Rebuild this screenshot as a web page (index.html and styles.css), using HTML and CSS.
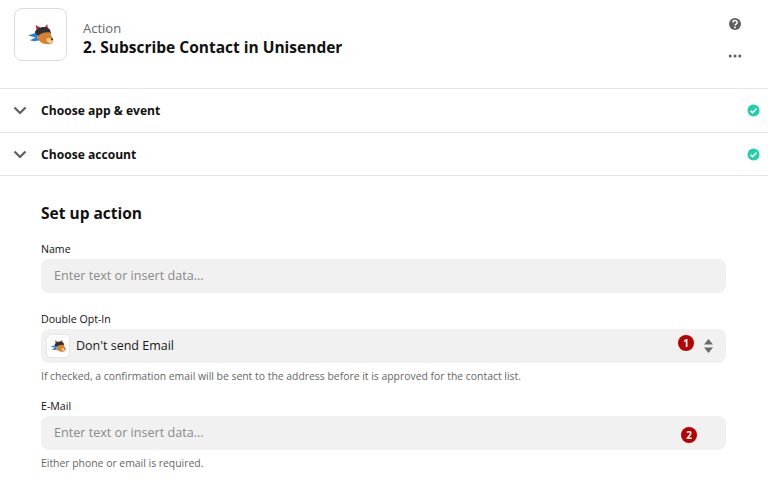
FILE: index.html
```html
<!DOCTYPE html>
<html lang="en">
<head>
  <meta charset="UTF-8" />
  <title>Subscribe Contact in Unisender</title>
  <link rel="stylesheet" href="styles.css">
</head>
<body>
  <svg width="0" height="0" class="defs">
    <symbol id="dog" viewBox="0 0 28 24">
      <path d="M1 13 L7 11 L11 10 L11 16 L14 18 L7 19 L3 18 L9 15 Z" fill="#2b7fd0"/>
      <path d="M10 8 L9 2 L14 5 Z" fill="#d8262c"/>
      <path d="M18 5 L21 1 L22 7 Z" fill="#d8262c"/>
      <path d="M8 10 C10 4 20 2 24 7 L25 11 L12 14 Z" fill="#2c3138"/>
      <path d="M11 14 C14 10 21 9 24 10 C25 14 28 17 27 20 C25 23 17 23 13 19 Z" fill="#d9812e"/>
      <path d="M20 17 C22 14 27 16 27 20 C25 22 21 22 20 17 Z" fill="#f0c98f"/>
      <circle cx="26" cy="17" r="1.1" fill="#2c3138"/>
    </symbol>
  </svg>

  <header class="top">
    <div class="app-icon"><svg width="27" height="23"><use href="#dog"/></svg></div>
    <div class="top-text">
      <div class="kind">Action</div>
      <h1>2. Subscribe Contact in Unisender</h1>
    </div>
    <div class="top-tools">
      <svg class="help" width="14" height="14" viewBox="0 0 14 14">
        <circle cx="7" cy="7" r="6" fill="#5f5f5f"/>
        <path d="M4.9 5.5 C4.9 2.9 9.2 2.9 9.2 5.4 C9.2 7 7 7 7 8.4" fill="none" stroke="#fff" stroke-width="1.5"/>
        <circle cx="7" cy="10.4" r="0.95" fill="#fff"/>
      </svg>
      <svg class="more" width="14" height="4" viewBox="0 0 14 4">
        <circle cx="2.2" cy="2" r="1.5" fill="#5f5f5f"/>
        <circle cx="7" cy="2" r="1.5" fill="#5f5f5f"/>
        <circle cx="11.8" cy="2" r="1.5" fill="#5f5f5f"/>
      </svg>
    </div>
  </header>

  <div class="step step-first">
    <svg class="chev" width="14" height="9" viewBox="0 0 14 9"><path d="M1.5 1.5 L7 7 L12.5 1.5" fill="none" stroke="#5f5f5f" stroke-width="2.2"/></svg>
    <span class="step-name">Choose app &amp; event</span>
    <svg class="ok" width="13" height="13" viewBox="0 0 13 13"><circle cx="6.5" cy="6.5" r="6" fill="#1fcfa8"/><path d="M3.6 6.8 L5.6 8.7 L9.5 4.6" fill="none" stroke="#fff" stroke-width="1.6"/></svg>
  </div>
  <div class="step">
    <svg class="chev" width="14" height="9" viewBox="0 0 14 9"><path d="M1.5 1.5 L7 7 L12.5 1.5" fill="none" stroke="#5f5f5f" stroke-width="2.2"/></svg>
    <span class="step-name">Choose account</span>
    <svg class="ok" width="13" height="13" viewBox="0 0 13 13"><circle cx="6.5" cy="6.5" r="6" fill="#1fcfa8"/><path d="M3.6 6.8 L5.6 8.7 L9.5 4.6" fill="none" stroke="#fff" stroke-width="1.6"/></svg>
  </div>

  <main class="setup">
    <h2>Set up action</h2>

    <div class="field">
      <label>Name</label>
      <div class="box placeholder">Enter text or insert data...</div>
    </div>

    <div class="field">
      <label>Double Opt-In</label>
      <div class="box select">
        <span class="mini-icon"><svg width="16" height="14"><use href="#dog"/></svg></span>
        <span class="value">Don't send Email</span>
        <span class="badge badge-one">1</span>
        <svg class="updown" width="9" height="14" viewBox="0 0 9 14"><path d="M4.5 0 L9 5.6 L0 5.6 Z M0 8.4 L9 8.4 L4.5 14 Z" fill="#6b6b6b"/></svg>
      </div>
      <p class="hint">If checked, a confirmation email will be sent to the address before it is approved for the contact list.</p>
    </div>

    <div class="field field-email">
      <label>E-Mail</label>
      <div class="box placeholder">Enter text or insert data...<span class="badge badge-two">2</span></div>
      <p class="hint">Either phone or email is required.</p>
    </div>
  </main>
</body>
</html>
```

FILE: styles.css
```css
html, body {
  margin: 0;
  padding: 0;
}
body {
  background: #fff;
  color: #1a1a1a;
  font-family: "Open Sans", sans-serif;
  height: 480px;
  overflow: hidden;
}
.defs {
  display: block;
  height: 0;
}
.top {
  display: flex;
  height: 89px;
  padding: 8px 26px 0 14px;
  box-sizing: border-box;
  border-bottom: 1px solid #e3e5e8;
}
.app-icon {
  width: 53px;
  height: 53px;
  box-sizing: border-box;
  border: 1px solid #dcdcdc;
  border-radius: 8px;
  display: flex;
  align-items: center;
  justify-content: center;
}
.top-text {
  flex: 1;
  margin-left: 16px;
  padding-top: 11px;
}
.kind {
  font-size: 13px;
  line-height: 18px;
  color: #666;
}
h1 {
  margin: 0;
  font-size: 15.5px;
  line-height: 20px;
  font-weight: 700;
  color: #111;
}
.top-tools {
  display: flex;
  flex-direction: column;
  align-items: center;
  padding-top: 9px;
  gap: 23px;
}
.help, .more {
  display: block;
}
.step {
  display: flex;
  align-items: center;
  height: 42px;
  padding: 0 8px 0 13px;
  border-bottom: 1px solid #e3e5e8;
}
.step-first {
  padding-bottom: 1px;
}
.chev {
  margin-right: 14px;
}
.step-name {
  flex: 1;
  font-size: 12.1px;
  font-weight: 700;
  color: #111;
}
.setup {
  padding: 27px 42px 0 41px;
}
h2 {
  margin: 0 0 19px;
  font-size: 15.5px;
  line-height: 20px;
  font-weight: 700;
  color: #111;
}
.field {
  margin-bottom: 19px;
}
.field-email {
  margin-top: -4px;
}
label {
  display: block;
  font-size: 10.6px;
  line-height: 15px;
  font-weight: 500;
  color: #111;
  margin-bottom: 2px;
}
.box {
  position: relative;
  height: 34px;
  box-sizing: border-box;
  border-radius: 8px;
  background: #f1f1f1;
  display: flex;
  align-items: center;
  font-size: 12.6px;
}
.placeholder {
  padding-left: 13px;
  padding-bottom: 2px;
  color: #8a8a8a;
  font-weight: 500;
}
.select {
  padding-left: 5px;
  padding-right: 13px;
}
.mini-icon {
  width: 24px;
  height: 24px;
  box-sizing: border-box;
  background: #fff;
  border: 1px solid #e6e6e6;
  border-radius: 5px;
  display: flex;
  align-items: center;
  justify-content: center;
  margin-right: 6px;
}
.value {
  flex: 1;
  margin-bottom: 2px;
  color: #1a1a1a;
  font-weight: 500;
  font-size: 12.5px;
}
.badge {
  position: absolute;
  width: 16px;
  height: 16px;
  border-radius: 50%;
  background: #b80000;
  color: #fff;
  font-size: 10px;
  font-weight: 700;
  line-height: 16px;
  text-align: center;
}
.badge-one {
  left: 637px;
  top: 6px;
}
.badge-two {
  left: 640px;
  top: 11px;
}
.hint {
  margin: 6px 0 0;
  font-size: 10.4px;
  line-height: 15px;
  color: #666;
}
```
